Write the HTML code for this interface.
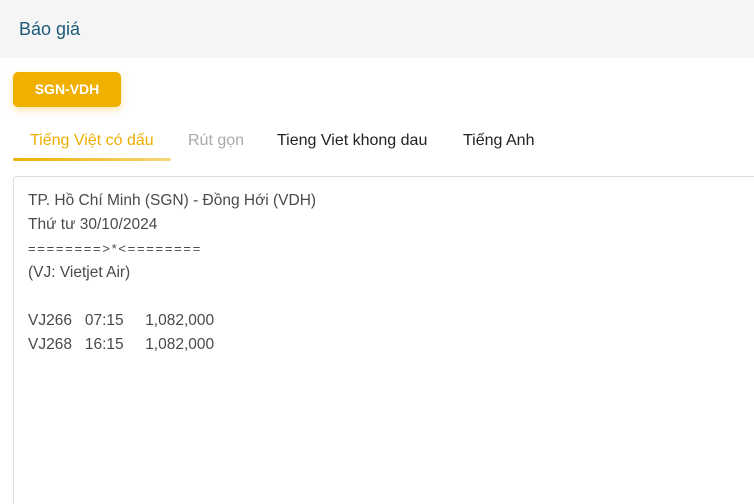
<!DOCTYPE html>
<html style="overflow:hidden;height:504px"><head><meta charset="utf-8"><style>
body{margin:0;width:754px;height:504px;overflow:hidden;background:#fff;font-family:"Liberation Sans",sans-serif;position:relative}
.hdr{position:absolute;left:0;top:0;width:754px;height:58px;background:#f5f5f5}
.hdr span{position:absolute;left:19px;top:19px;font-size:18px;color:#1c5a78}
.btn{position:absolute;left:13px;top:72px;width:108px;height:35px;background:#f0b000;border-radius:5px;color:#fff;font-weight:bold;font-size:14px;text-align:center;line-height:35px;box-shadow:0 3px 8px rgba(240,176,0,.35)}
.tab{position:absolute;top:132px;font-size:16px;color:#222}
.ul{position:absolute;left:13px;top:158px;width:158px;height:3px;background:linear-gradient(90deg,#eeb100,#f5d67a);border-radius:2px}
.box{position:absolute;left:13px;top:176px;width:760px;height:327px;border:1px solid #ddd;border-bottom:none;border-right:none;border-radius:4px 0 0 0}
.txt{position:absolute;left:28px;top:189px;font-size:15.5px;line-height:24px;color:#4a4a4a;white-space:pre}
</style></head><body>
<div class="hdr"><span>Báo giá</span></div>
<div class="btn">SGN-VDH</div>
<div class="tab" style="left:30px;color:#eeae00">Tiếng Việt có dấu</div>
<div class="tab" style="left:188px;color:#aaa">Rút gọn</div>
<div class="tab" style="left:277px">Tieng Viet khong dau</div>
<div class="tab" style="left:463px">Tiếng Anh</div>
<div class="ul"></div>
<div class="box"></div>
<div class="txt">TP. Hồ Chí Minh (SGN) - Đồng Hới (VDH)
Thứ tư 30/10/2024
<span style="font-size:13px;letter-spacing:1.7px">========&gt;*&lt;========</span>
(VJ: Vietjet Air)

VJ266   07:15     1,082,000
VJ268   16:15     1,082,000</div>
</body></html>
